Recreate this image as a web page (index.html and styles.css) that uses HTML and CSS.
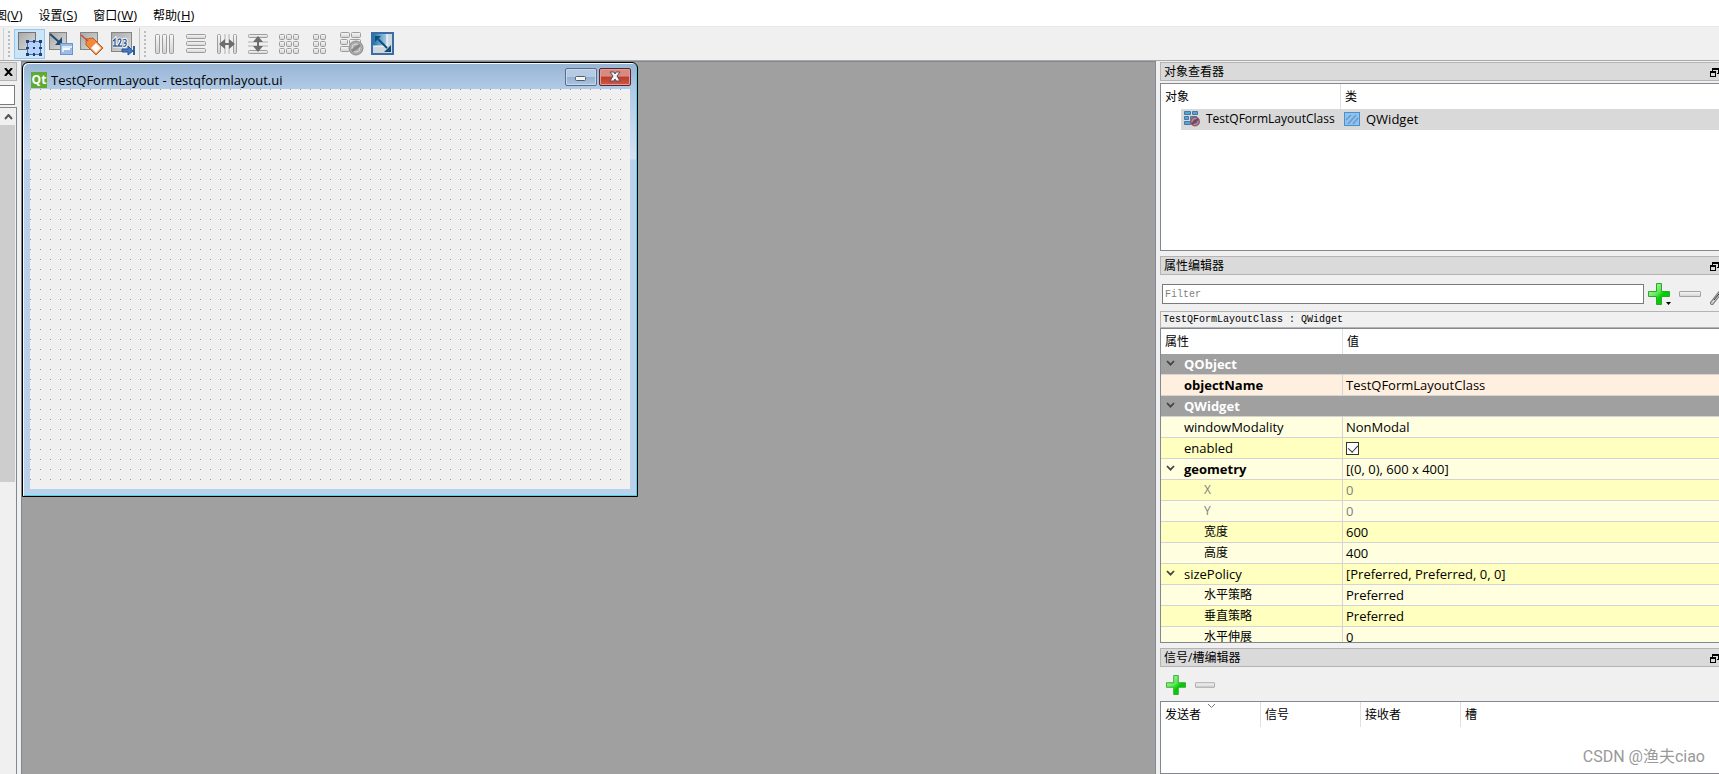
FILE: index.html
```html
<!DOCTYPE html>
<html lang="zh-CN">
<head>
<meta charset="utf-8">
<title>Qt Designer</title>
<link rel="stylesheet" href="styles.css">
</head>
<body>
<svg class="defs" aria-hidden="true">
  <defs>
    <linearGradient id="gray" x1="0" y1="0" x2="1" y2="1"><stop offset="0" stop-color="#a8a8a8"/><stop offset="1" stop-color="#dcdcdc"/></linearGradient>
    <linearGradient id="soft" x1="0" y1="0" x2="0" y2="1"><stop offset="0" stop-color="#f8f8f8"/><stop offset="1" stop-color="#d2d2d2"/></linearGradient>
    <linearGradient id="green" x1="0" y1="0" x2="1" y2="1"><stop offset="0" stop-color="#c4ffc0"/><stop offset=".45" stop-color="#5be852"/><stop offset=".6" stop-color="#00cf00"/><stop offset="1" stop-color="#12c512"/></linearGradient>
    <linearGradient id="blue" x1="0" y1="0" x2="1" y2="0"><stop offset="0" stop-color="#1f72ab"/><stop offset="1" stop-color="#a8cdea"/></linearGradient>
    <pattern id="dots" width="10" height="10" patternUnits="userSpaceOnUse"><rect width="1" height="1" fill="#949494"/></pattern>
    <symbol id="plus" viewBox="0 0 22 22"><path d="M8.500 .5h5v8h8v5h-8v8h-5v-8h-8v-5h8z" fill="url(#green)" stroke="#2fa52f"/></symbol>
    <symbol id="minus" viewBox="0 0 22 22"><rect x=".5" y="8.500" width="21" height="5" rx=".5" fill="url(#soft)" stroke="#a3a3a3"/></symbol>
    <symbol id="float" viewBox="0 0 9 9"><path d="M2 0h7v6H7V5h1V2H3v1H2z" fill="#000"/><path d="M0 3h6v6H0zM1 5v3h4V5z" fill="#000" fill-rule="evenodd"/></symbol>
    <symbol id="chev" viewBox="0 0 9 7"><path d="M1 1l3.500 3.700L8 1" fill="none" stroke="#444" stroke-width="1.800"/></symbol>
  </defs>
</svg>

<nav class="menubar" aria-label="菜单">
  <button class="menu">图<span class="key">(<u>V</u>)</span></button>
  <button class="menu">设置<span class="key">(<u>S</u>)</span></button>
  <button class="menu">窗口<span class="key">(<u>W</u>)</span></button>
  <button class="menu">帮助<span class="key">(<u>H</u>)</span></button>
</nav>

<div class="toolbar" role="toolbar" aria-label="工具栏">
  <i class="stub"></i>
  <i class="grip"></i>
  <button class="tool active" aria-label="编辑控件"><svg viewBox="0 0 24 24"><rect x=".5" y=".5" width="17" height="17" fill="url(#gray)" stroke="#737373"/><rect x="9.500" y="9.500" width="13" height="13" fill="#b5d3fa" stroke="#4773b5"/><path d="M8 8h3v3H8zM15 8h2v3h-2zM21 8h3v3h-3zM8 15h3v2H8zM21 15h3v2h-3zM8 21h3v3H8zM15 21h2v3h-2zM21 21h3v3h-3z" fill="#203e70"/><path d="M15 15h2v2h-2z" fill="#203e70"/></svg></button>
  <button class="tool" aria-label="编辑信号/槽"><svg viewBox="0 0 24 24"><rect x=".5" y=".5" width="17" height="17" fill="url(#gray)" stroke="#858585"/><path d="M1 2l9 8" stroke="#234b70" stroke-width="2"/><path d="M13 13V5l-7 8z" fill="#234b70"/><rect x="11.500" y="11.500" width="12" height="11" fill="#9bbbe9" stroke="#6c94cb"/><path d="M13 14h10v2H15v4h-2z" fill="#dceaff"/><path d="M14 16h7v2h-7z" fill="#f6faff"/></svg></button>
  <button class="tool" aria-label="编辑伙伴"><svg viewBox="0 0 24 24"><rect x=".5" y=".5" width="17" height="17" fill="url(#gray)" stroke="#858585"/><path d="M6 7l7-1 10 10-7 7L6 13z" fill="#f28a3e" stroke="#bd5d21"/><path d="M16 11l5 5-5 5-5-5z" fill="#fff"/><path d="M1 3l7 6" stroke="#c84c35" stroke-width="1.500"/></svg></button>
  <button class="tool" aria-label="编辑Tab顺序"><svg viewBox="0 0 24 24"><rect x=".5" y=".5" width="20" height="19" fill="url(#gray)" stroke="#858585"/><path d="M2 9l2-2v7M2 14h4M7 8q2-2 3 0 0 2-3 6h4M12 8q4-2 3 2 0 1-2 1 3 0 2 2-1 2-3 1" fill="none" stroke="#fff" stroke-width="3"/><path d="M2 9l2-2v7M2 14h4M7 8q2-2 3 0 0 2-3 6h4M12 8q4-2 3 2 0 1-2 1 3 0 2 2-1 2-3 1" fill="none" stroke="#315f9c" stroke-width="1.300"/><path d="M11 17h6v-3l5 5-5 4v-3h-6z" fill="#427bc4" stroke="#265494"/><path d="M22 14h2v9h-2z" fill="#315f9c"/></svg></button>
  <i class="rule"></i>
  <i class="grip"></i>
  <button class="tool" aria-label="水平布局"><svg viewBox="0 0 24 24"><g fill="url(#soft)" stroke="#9c9c9c"><rect x="1.500" y="2.500" width="4" height="19" rx="1"/><rect x="8.500" y="2.500" width="4" height="19" rx="1"/><rect x="15.500" y="2.500" width="4" height="19" rx="1"/></g></svg></button>
  <button class="tool" aria-label="垂直布局"><svg viewBox="0 0 24 24"><g fill="url(#soft)" stroke="#9c9c9c"><rect x="1.500" y="2.500" width="19" height="4" rx="1"/><rect x="1.500" y="9.500" width="19" height="4" rx="1"/><rect x="1.500" y="16.500" width="19" height="4" rx="1"/></g></svg></button>
  <button class="tool" aria-label="水平分裂器"><svg viewBox="0 0 24 24"><g fill="url(#soft)" stroke="#9c9c9c"><rect x="1.500" y="2.500" width="3" height="19" rx="1"/><rect x="17.500" y="2.500" width="3" height="19" rx="1"/></g><path d="M9 2v20M13 2v20" stroke="#b0b0b0"/><path d="M3 12l6-5v4h4V7l6 5-6 5v-4H9v4z" fill="#6c6c6c"/></svg></button>
  <button class="tool" aria-label="垂直分裂器"><svg viewBox="0 0 24 24"><g fill="url(#soft)" stroke="#9c9c9c"><rect x="1.500" y="2.500" width="19" height="3" rx="1"/><rect x="1.500" y="18.500" width="19" height="3" rx="1"/></g><path d="M1 10h20M1 14h20" stroke="#b0b0b0"/><path d="M11 4l5 6h-4v4h4l-5 6-5-6h4v-4H6z" fill="#6c6c6c"/></svg></button>
  <button class="tool" aria-label="栅格布局"><svg viewBox="0 0 24 24"><g fill="url(#soft)" stroke="#9c9c9c"><rect x="1.500" y="2.500" width="5" height="5" rx="1"/><rect x="8.500" y="2.500" width="5" height="5" rx="1"/><rect x="15.500" y="2.500" width="5" height="5" rx="1"/><rect x="1.500" y="9.500" width="5" height="5" rx="1"/><rect x="8.500" y="9.500" width="5" height="5" rx="1"/><rect x="15.500" y="9.500" width="5" height="5" rx="1"/><rect x="1.500" y="16.500" width="5" height="5" rx="1"/><rect x="8.500" y="16.500" width="5" height="5" rx="1"/><rect x="15.500" y="16.500" width="5" height="5" rx="1"/></g></svg></button>
  <button class="tool" aria-label="表单布局"><svg viewBox="0 0 24 24"><g fill="url(#soft)" stroke="#9c9c9c"><rect x="4.500" y="2.500" width="5" height="5" rx="1"/><rect x="11.500" y="2.500" width="5" height="5" rx="1"/><rect x="4.500" y="9.500" width="5" height="5" rx="1"/><rect x="11.500" y="9.500" width="5" height="5" rx="1"/><rect x="4.500" y="16.500" width="5" height="5" rx="1"/><rect x="11.500" y="16.500" width="5" height="5" rx="1"/></g></svg></button>
  <button class="tool" aria-label="打破布局"><svg viewBox="0 0 24 24"><g fill="url(#soft)" stroke="#9c9c9c"><rect x=".5" y=".5" width="9" height="5" rx="1"/><rect x="11.500" y=".5" width="9" height="5" rx="1"/><rect x=".5" y="7.500" width="7" height="5" rx="1"/><rect x="9.500" y="7.500" width="11" height="5" rx="1"/><rect x=".5" y="14.500" width="9" height="5" rx="1"/></g><circle cx="16" cy="16" r="7" fill="#ababab" stroke="#8c8c8c"/><circle cx="16" cy="16" r="4" fill="none" stroke="#ddd"/><path d="M12 19l8-6" stroke="#888" stroke-width="3"/></svg></button>
  <button class="tool" aria-label="调整大小"><svg viewBox="0 0 24 24"><rect x="1" y="1" width="21" height="21" fill="#d2d7dc" stroke="#3b6da6" stroke-width="2"/><path d="M2 2h14v12H2z" fill="url(#blue)"/><path d="M16 2v12H2" fill="none" stroke="#fff"/><path d="M7 7l9 9" stroke="#0d4d78" stroke-width="2"/><path d="M4 4h6l-6 6zM20 20h-7l7-7z" fill="#0d4d78"/></svg></button>
</div>

<main class="workspace">
  <aside class="leftdock" aria-label="控件盒">
    <button class="dockclose" aria-label="关闭"><svg viewBox="0 0 9 8"><path d="M1 0l7 8M8 0L1 8" stroke="#000" stroke-width="2"/></svg></button>
    <input class="boxfilter" aria-label="过滤控件">
    <div class="scroller">
      <button class="scrollup" aria-label="向上滚动"><svg viewBox="0 0 9 6"><path d="M1 5l3.500-4L8 5" fill="none" stroke="#555" stroke-width="2"/></svg></button>
      <div class="thumb"></div>
    </div>
  </aside>

  <section class="mdi" aria-label="窗体编辑区">
    <article class="form">
      <header class="titlebar">
        <span class="qt" aria-hidden="true">Qt</span>
        <h1 class="formtitle">TestQFormLayout - testqformlayout.ui</h1>
        <button class="winbtn" aria-label="最小化"><svg viewBox="0 0 30 16"><rect x="9.500" y="7.500" width="10" height="4" rx="1" fill="#f6f6f6" stroke="#555b66"/></svg></button>
        <button class="winbtn close" aria-label="关闭窗体"><svg viewBox="0 0 30 16"><path d="M10 3h4l1 2 1-2h4l-3 4 3 5h-4l-1-2-1 2h-4l3-5z" fill="#f4f4f4" stroke="#574a58"/></svg></button>
      </header>
      <svg class="canvas" aria-label="窗体"><rect width="100%" height="100%" fill="url(#dots)"/></svg>
    </article>
  </section>

  <aside class="rightdock">
    <section class="dock objects">
      <header class="docktitle"><h2>对象查看器</h2><button class="floatbtn" aria-label="浮动对象查看器"><svg><use href="#float"/></svg></button></header>
      <div class="frame">
        <table class="tree">
          <thead><tr><th scope="col">对象</th><th scope="col">类</th></tr></thead>
          <tbody><tr>
            <td><span class="node"><svg viewBox="0 0 16 16"><g fill="#56a4d6" stroke="#4379a3"><path d="M.5.500h6v3h-6zM8.500.500h5v3h-5zM.5 5.500h4v3h-4zM6.500 5.500h6v3h-6zM.5 10.500h6v3h-6z"/></g><circle cx="11" cy="10.500" r="5" fill="#8e5c72"/><circle cx="11" cy="10.500" r="3" fill="none" stroke="#c09cae"/><path d="M8 13l6-5" stroke="#6b4460" stroke-width="2"/></svg>TestQFormLayoutClass</span></td>
            <td><span class="kind"><svg viewBox="0 0 16 14"><rect x=".5" y=".5" width="15" height="13" fill="#8fc3ee" stroke="#4a8fd0"/><path d="M2 8l5-5M4 12l8-9M9 12l5-6" stroke="#6a9bc8" stroke-width="1.500"/></svg>QWidget</span></td>
          </tr></tbody>
        </table>
      </div>
    </section>

    <section class="dock props">
      <header class="docktitle"><h2>属性编辑器</h2><button class="floatbtn" aria-label="浮动属性编辑器"><svg><use href="#float"/></svg></button></header>
      <div class="filterbar">
        <input class="filter" placeholder="Filter" aria-label="Filter">
        <button class="mini" aria-label="添加动态属性"><svg><use href="#plus"/></svg><svg class="drop" viewBox="0 0 5 3"><path d="M0 0h5L2.500 3z"/></svg></button>
        <button class="mini" aria-label="删除动态属性"><svg><use href="#minus"/></svg></button>
        <button class="mini" aria-label="配置属性编辑器"><svg viewBox="0 0 22 22"><path d="M2 20L13 6" stroke="#777" stroke-width="4" stroke-linecap="round"/><path d="M2 20L13 6" stroke="#d5d5d5" stroke-width="2" stroke-linecap="round"/><path d="M4 17l9-11" stroke="#333"/></svg></button>
      </div>
      <p class="objlabel">TestQFormLayoutClass : QWidget</p>
      <div class="frame">
        <table class="proptable">
          <thead><tr><th scope="col">属性</th><th scope="col">值</th></tr></thead>
          <tbody>
            <tr class="group"><td colspan="2"><svg class="chev"><use href="#chev"/></svg>QObject</td></tr>
            <tr class="peach"><td class="bold">objectName</td><td>TestQFormLayoutClass</td></tr>
            <tr class="group"><td colspan="2"><svg class="chev"><use href="#chev"/></svg>QWidget</td></tr>
            <tr><td>windowModality</td><td>NonModal</td></tr>
            <tr class="alt"><td><label for="enabled">enabled</label></td><td><input class="check" type="checkbox" id="enabled" checked></td></tr>
            <tr><td class="bold"><svg class="chev"><use href="#chev"/></svg>geometry</td><td>[(0, 0), 600 x 400]</td></tr>
            <tr class="alt off"><td class="sub">X</td><td>0</td></tr>
            <tr class="off"><td class="sub">Y</td><td>0</td></tr>
            <tr class="alt"><td class="sub">宽度</td><td>600</td></tr>
            <tr><td class="sub">高度</td><td>400</td></tr>
            <tr class="alt"><td><svg class="chev"><use href="#chev"/></svg>sizePolicy</td><td>[Preferred, Preferred, 0, 0]</td></tr>
            <tr><td class="sub">水平策略</td><td>Preferred</td></tr>
            <tr class="alt"><td class="sub">垂直策略</td><td>Preferred</td></tr>
            <tr><td class="sub">水平伸展</td><td>0</td></tr>
          </tbody>
        </table>
      </div>
    </section>

    <section class="dock signals">
      <header class="docktitle"><h2>信号/槽编辑器</h2><button class="floatbtn" aria-label="浮动信号/槽编辑器"><svg><use href="#float"/></svg></button></header>
      <div class="sigbar">
        <button class="mini" aria-label="添加连接"><svg><use href="#plus"/></svg></button>
        <button class="mini" aria-label="删除连接"><svg><use href="#minus"/></svg></button>
      </div>
      <div class="frame">
        <table class="sigtable">
          <thead><tr><th scope="col">发送者<svg class="sort" viewBox="0 0 7 4"><path d="M0 0l3.500 3.500L7 0" fill="none" stroke="#777"/></svg></th><th scope="col">信号</th><th scope="col">接收者</th><th scope="col">槽</th></tr></thead>
        </table>
        <p class="watermark">CSDN @渔夫ciao</p>
      </div>
    </section>
  </aside>
</main>
</body>
</html>
```
FILE: styles.css
```css
* { box-sizing: border-box; }

body {
  margin: 0;
  height: 100vh;
  display: flex;
  flex-direction: column;
  overflow: hidden;
  background: #f0f0f0;
  color: #000;
  font: 12px/20px "Open Sans", "Noto Sans CJK SC", sans-serif;
}

button, input { font: inherit; color: inherit; border-radius: 0; }
button { padding: 0; border: 0; background: none; }
svg { display: block; }
h1, h2, p { margin: 0; font-size: 12px; font-weight: 400; }
table { border-collapse: separate; border-spacing: 0; width: 100%; table-layout: fixed; }
th, td { padding: 0; font-weight: 400; text-align: left; white-space: nowrap; }
.defs { position: absolute; width: 0; height: 0; }

/* Menu and toolbar */
.menubar {
  flex: none;
  display: flex;
  gap: 16px;
  height: 27px;
  padding-top: 5px;
  background: #fff;
  border-bottom: 1px solid #e6e6e6;
}
.menu { white-space: nowrap; }
.menu:first-child { margin-left: -5px; }
.key { font-size: 13px; }

.toolbar {
  flex: none;
  display: flex;
  align-items: center;
  height: 34px;
  padding-top: 1px;
  border-bottom: 1px solid #a8a8a8;
}
.stub, .rule { width: 4px; height: 32px; border-right: 1px solid #cfcfcf; }
.rule { width: 1px; border-color: #c0c0c0; }
.grip {
  width: 2px;
  height: 26px;
  margin: 0 4px;
  background: repeating-linear-gradient(#bbb 0 2px, transparent 2px 4px);
}
.rule { margin-left: 1px; }
.tool { display: grid; place-items: center; width: 31px; height: 30px; }
.tool svg { width: 24px; height: 24px; }
.tool.active { background: #cce4f7; border: 1px solid #90c8f6; }

/* Work area */
.workspace {
  flex: 1;
  min-height: 0;
  display: grid;
  grid-template-columns: 21px minmax(0, 1fr) 563px;
}
.leftdock { display: flex; flex-direction: column; padding-top: 1px; }
.dockclose {
  display: grid;
  place-items: center;
  width: 17px;
  height: 19px;
  border: 1px solid #b4b4b4;
  border-left: 0;
  background: #dadada;
}
.dockclose svg { width: 9px; height: 8px; }
.boxfilter {
  width: 15px;
  height: 20px;
  margin: 4px 0 2px;
  padding: 0;
  border: 1px solid #7a7a7a;
  border-left: 0;
  background: #fff;
}
.scroller { flex: 1; width: 17px; border: 1px solid #828790; border-width: 1px 1px 0 0; }
.scrollup { display: grid; place-items: center; width: 16px; height: 17px; }
.scrollup svg { width: 9px; height: 6px; }
.thumb { width: 15px; height: 357px; background: #cdcdcd; }

.mdi {
  overflow: hidden;
  background: #a0a0a0;
  border: 1px solid #828790;
  border-bottom: 0;
}
.form {
  width: 616px;
  padding: 1px 7px 7px;
  border: 1px solid #000;
  border-radius: 6px 6px 0 0;
  box-shadow: inset 1px 1px #f4faff, inset -1px -1px #4bd3ea;
  background: linear-gradient(#98b5d4, #b0cae6 26px, #d5e3f4 96px, #b9d1ea 97px);
}
.titlebar { display: flex; align-items: center; height: 25px; padding-left: 1px; }
.qt {
  width: 16px;
  height: 16px;
  margin-top: 7px;
  background: #5faa33;
  color: #fff;
  font: bold 12px/16px "Open Sans", sans-serif;
  text-align: center;
}
.formtitle { flex: 1; margin: 6px 0 0 4px; font-size: 13px; }
.winbtn {
  width: 32px;
  height: 18px;
  margin: 1px 0 0 2px;
  border: 1px solid #596d8b;
  border-radius: 2px;
  box-shadow: inset 0 0 0 1px #c9d9eb;
  background: linear-gradient(#b5cbe4 50%, #93afd0 50%, #abc6e2);
}
.winbtn.close {
  margin-right: -1px;
  border-color: #5c2430;
  box-shadow: inset 0 0 0 1px #de9e98;
  background: linear-gradient(#d98a7e 45%, #bb3b29 50%, #cf5a46);
}
.winbtn svg { width: 30px; height: 16px; }
.canvas { width: 600px; height: 400px; background: #f0f0f0; }

/* Docks */
.rightdock {
  min-width: 0;
  display: flex;
  flex-direction: column;
  gap: 5px;
  padding: 1px 0 0 4px;
}
.dock { display: flex; flex-direction: column; min-height: 0; }
.objects { flex: 0 0 189px; }
.props { flex: 0 0 387px; }
.signals { flex: 1; }
.docktitle {
  flex: none;
  display: flex;
  justify-content: space-between;
  align-items: center;
  height: 19px;
  padding: 1px 0 0 3px;
  border: 1px solid #b4b4b4;
  border-right: 0;
  background: #dadada;
}
.floatbtn svg { width: 9px; height: 9px; }
.frame {
  flex: 1;
  min-height: 0;
  overflow: hidden;
  position: relative;
  background: #fff;
  border: 1px solid #828790;
  border-right: 0;
}
.objects .frame { margin-top: 2px; }
th { height: 25px; padding-left: 4px; border-right: 1px solid #e0e0e0; }
th:last-child { border-right: 0; }

.tree th:first-child { width: 180px; }
.tree td { height: 21px; }
.tree td:last-child { background: #d9d9d9; }
.node, .kind { display: flex; align-items: center; height: 21px; padding-bottom: 1px; background: #d9d9d9; }
.node { gap: 6px; margin-left: 20px; padding-left: 3px; }
.node svg { flex: none; width: 16px; height: 16px; }
.kind { gap: 6px; padding-left: 3px; font-size: 13px; }
.kind svg { width: 16px; height: 14px; }

.filterbar {
  flex: none;
  display: flex;
  align-items: center;
  gap: 9px;
  height: 36px;
  padding: 2px 0 0 2px;
  overflow: hidden;
}
.filter {
  flex: 1;
  min-width: 0;
  height: 20px;
  margin-right: -5px;
  padding: 0 2px;
  border: 1px solid #7a7a7a;
  background: #fff;
  font: 10px/18px "Liberation Mono", monospace;
}
.filter::placeholder { color: #808080; opacity: 1; }
.mini { flex: none; position: relative; width: 22px; height: 22px; }
.mini svg { width: 22px; height: 22px; }
.mini .drop { position: absolute; right: -1px; bottom: 0; width: 5px; height: 3px; }
.filterbar .mini:last-child { margin-right: -13px; }

.objlabel {
  flex: none;
  height: 17px;
  padding-left: 2px;
  border: 1px solid #b4b4b4;
  border-width: 1px 0 1px 1px;
  font: 10px/16px "Liberation Mono", monospace;
}

.proptable th:first-child { width: 182px; }
.proptable td {
  position: relative;
  height: 21px;
  padding-left: 23px;
  border-bottom: 1px solid #d4d4d4;
  background: #ffffdf;
  font-size: 13px;
}
.proptable td:first-child { border-right: 1px solid #d4d4d4; }
.proptable td:last-child:not(:first-child) { padding-left: 3px; }
.proptable .alt td { background: #ffffbf; }
.proptable .peach td { background: #ffefdf; }
.proptable .group td { background: #a0a0a0; border-right: 0; color: #fff; font-weight: 700; }
.proptable .off td { color: #808080; }
.proptable td.bold { font-weight: 700; }
.proptable td.sub { padding-left: 43px; font-size: 12px; }
.chev { position: absolute; left: 5px; top: 6px; width: 9px; height: 7px; }
.check {
  appearance: none;
  display: block;
  width: 13px;
  height: 13px;
  margin: 0;
  border: 1px solid #333;
  background: #fff;
  position: relative;
}
.check:checked::after {
  content: "";
  position: absolute;
  left: 3px;
  top: 0;
  width: 5px;
  height: 8px;
  border: solid #333;
  border-width: 0 1px 1px 0;
  transform: rotate(42deg);
}

.sigbar { flex: none; display: flex; align-items: center; gap: 9px; height: 34px; padding: 2px 0 0 6px; }
.sigbar .mini, .sigbar .mini svg { width: 20px; height: 20px; }
.sigtable th { position: relative; width: 100px; }
.sigtable th:last-child { width: auto; }
.sort { position: absolute; left: 47px; top: 2px; width: 7px; height: 4px; }
.watermark {
  position: absolute;
  right: 14px;
  bottom: 6px;
  color: #999;
  font: 16px/20px Roboto, "Noto Sans CJK SC", sans-serif;
}
```
